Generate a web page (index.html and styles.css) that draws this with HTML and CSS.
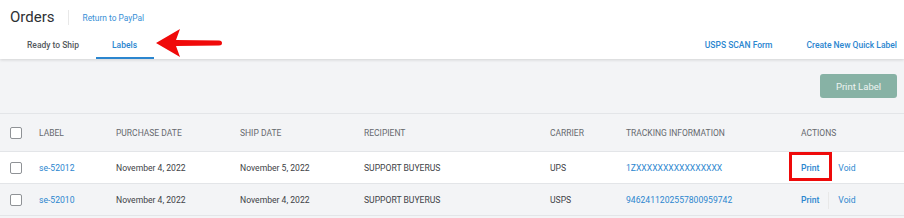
FILE: index.html
```html
<!DOCTYPE html>
<html>
<head>
<meta charset="utf-8">
<link rel="stylesheet" href="styles.css">
</head>
<body>
<header class="top">
  <div class="title-row">
    <h1 class="title">Orders</h1>
    <span class="divider"></span>
    <a class="return">Return to PayPal</a>
  </div>
  <div class="tabs-row">
    <nav class="tabs">
      <a class="tab">Ready to Ship</a>
      <a class="tab active">Labels</a>
    </nav>
    <div class="links">
      <a class="link">USPS SCAN Form</a>
      <a class="link">Create New Quick Label</a>
    </div>
  </div>
  <svg class="arrow" width="72" height="32" viewBox="0 0 72 32">
    <path d="M1 15 L25 1 L21 12 L64 12.5 Q67 12.5 67 15 Q67 17.5 64 17.5 L21 18 L25 29 Z" fill="#f00a0a"/>
  </svg>
</header>
<main class="content">
  <div class="toolbar">
    <button class="print-btn">Print Label</button>
  </div>
  <table class="grid">
    <colgroup>
      <col class="c-cb"><col class="c-label"><col class="c-pd"><col class="c-sd"><col class="c-rec"><col class="c-car"><col class="c-trk"><col>
    </colgroup>
    <thead>
      <tr>
        <th><span class="cb"></span></th>
        <th>LABEL</th>
        <th>PURCHASE DATE</th>
        <th>SHIP DATE</th>
        <th>RECIPIENT</th>
        <th>CARRIER</th>
        <th>TRACKING INFORMATION</th>
        <th>ACTIONS</th>
      </tr>
    </thead>
    <tbody>
      <tr class="white">
        <td><span class="cb"></span></td>
        <td><a class="blue">se-52012</a></td>
        <td>November 4, 2022</td>
        <td>November 5, 2022</td>
        <td>SUPPORT BUYERUS</td>
        <td>UPS</td>
        <td><a class="blue">1ZXXXXXXXXXXXXXXXX</a></td>
        <td><div class="actions"><a class="act bold boxed">Print</a><a class="act">Void</a></div></td>
      </tr>
      <tr>
        <td><span class="cb"></span></td>
        <td><a class="blue">se-52010</a></td>
        <td>November 4, 2022</td>
        <td>November 4, 2022</td>
        <td>SUPPORT BUYERUS</td>
        <td>USPS</td>
        <td><a class="blue">9462411202557800959742</a></td>
        <td><div class="actions"><a class="act bold sep">Print</a><a class="act">Void</a></div></td>
      </tr>
    </tbody>
  </table>
</main>
</body>
</html>
```

FILE: styles.css
```css
* { box-sizing: border-box; }
html, body { margin: 0; padding: 0; }
body {
  background: #f3f4f6;
  font-family: Roboto, "Liberation Sans", Arial, sans-serif;
  color: #333;
  width: 904px;
  height: 218px;
  overflow: hidden;
}
a { text-decoration: none; cursor: pointer; }
.top {
  position: relative;
  background: #fff;
  height: 59px;
  box-shadow: 0 1px 3px rgba(0,0,0,0.14);
  display: flex;
  flex-direction: column;
}
.title-row {
  display: flex;
  align-items: center;
  height: 34px;
  padding-left: 10px;
}
.title {
  margin: 0;
  font-size: 15px;
  font-weight: 400;
  color: #2e3033;
}
.divider {
  width: 1px;
  height: 15px;
  background: #e8e8e8;
  margin: 0 14px 0 13px;
}
.return {
  font-size: 8.4px;
  color: #3a8fd6;
  padding-top: 1px;
}
.tabs-row {
  flex: 1;
  display: flex;
  justify-content: space-between;
  align-items: stretch;
}
.tabs { display: flex; padding-left: 10px; }
.tab {
  display: flex;
  align-items: center;
  padding: 0 17px 1px 17px;
  font-size: 8.5px;
  font-weight: 500;
  color: #555a60;
  border-bottom: 2px solid transparent;
}
.tab.active {
  color: #2b86cf;
  border-bottom-color: #2b86cf;
  padding-left: 16px;
}
.links {
  display: flex;
  align-items: center;
  gap: 34px;
  padding-right: 7px;
  padding-bottom: 3px;
}
.link {
  font-size: 8.5px;
  font-weight: 500;
  color: #2b86cf;
}
.arrow {
  position: absolute;
  left: 155px;
  top: 28px;
}
.toolbar {
  display: flex;
  justify-content: flex-end;
  padding: 15px 7px 15px 0;
}
.print-btn {
  width: 77px;
  height: 24px;
  border: none;
  border-radius: 3px;
  background: #87b2a5;
  color: #eef4f2;
  font-family: inherit;
  font-size: 9.5px;
  padding: 0;
}
.grid {
  width: 904px;
  border-collapse: collapse;
  table-layout: fixed;
  font-size: 8.6px;
}
.c-cb { width: 39px; }
.c-label { width: 77px; }
.c-pd { width: 124px; }
.c-sd { width: 124px; }
.c-rec { width: 186px; }
.c-car { width: 76px; }
.c-trk { width: 175px; }
.grid th, .grid td {
  text-align: left;
  padding: 0;
  white-space: nowrap;
  border-top: 1px solid #e3e5e8;
  border-bottom: 1px solid #e3e5e8;
}
.grid th:first-child, .grid td:first-child { padding-left: 10px; }
.grid th {
  height: 38px;
  font-weight: 400;
  color: #66696e;
  font-size: 8.5px;
}
.grid td { height: 32px; color: #404246; }
.grid tr.white td { background: #fff; }
.cb {
  display: block;
  width: 12px;
  height: 12px;
  border: 1px solid #8f9296;
  border-radius: 2px;
  background: #fff;
}
.blue { color: #2b86cf; }
.actions { display: flex; align-items: center; }
.act { color: #2b86cf; }
.act.bold { font-weight: 500; }
.act:first-child { margin-right: 19px; }
.boxed { position: relative; }
.boxed::after {
  content: "";
  position: absolute;
  left: -12px;
  top: -11px;
  width: 43px;
  height: 29px;
  border: 3px solid #ee0a0a;
  box-sizing: border-box;
}
.sep { position: relative; }
.sep::after {
  content: "";
  position: absolute;
  right: -10px;
  top: -3px;
  height: 17px;
  width: 1px;
  background: #e8e8e8;
}
```
